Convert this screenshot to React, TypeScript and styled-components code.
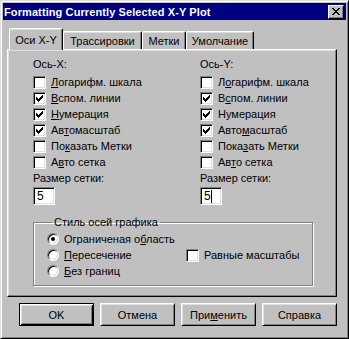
import React from "react";
import styled, { createGlobalStyle } from "styled-components";

const GlobalStyle = createGlobalStyle`
  body {
    margin: 0;
    background: #c0c0c0;
    font-family: "Liberation Sans", Arial, sans-serif;
    font-size: 11px;
    color: #000;
  }
`;

const Window = styled.div`
  box-sizing: border-box;
  width: 349px;
  height: 339px;
  padding: 2px;
  background: #c0c0c0;
  border: 1px solid;
  border-color: #dfdfdf #000 #000 #dfdfdf;
  box-shadow: inset 1px 1px #fff, inset -1px -1px #808080;
`;

const TitleBar = styled.div`
  display: flex;
  align-items: center;
  justify-content: space-between;
  height: 17px;
  padding: 0 2px 0 1px;
  background: #000080;
  color: #fff;
  font-weight: bold;
  font-size: 11px;
  letter-spacing: 0.1px;
`;

const CloseButton = styled.div`
  box-sizing: border-box;
  width: 16px;
  height: 14px;
  display: flex;
  align-items: center;
  justify-content: center;
  background: #c0c0c0;
  border: 1px solid;
  border-color: #fff #000 #000 #fff;
  box-shadow: inset -1px -1px #808080;
`;

const Body = styled.div`
  padding: 7px 0 0 4px;
`;

const TabRow = styled.div`
  display: flex;
  align-items: flex-end;
  height: 22px;
  padding-left: 2px;
  position: relative;
  z-index: 1;
`;

const Tab = styled.div<{ $w: number; $active?: boolean }>`
  box-sizing: border-box;
  width: ${(p) => p.$w}px;
  height: ${(p) => (p.$active ? 22 : 18)}px;
  margin-bottom: ${(p) => (p.$active ? -1 : 0)}px;
  display: flex;
  align-items: center;
  justify-content: center;
  padding-top: ${(p) => (p.$active ? 0 : 1)}px;
  background: #c0c0c0;
  border-top: 1px solid #fff;
  border-left: 1px solid #fff;
  border-right: 1px solid #000;
  border-radius: 2px 2px 0 0;
  box-shadow: inset -1px 0 #808080, inset 0 1px #dfdfdf;
  white-space: nowrap;
`;

const Panel = styled.div`
  box-sizing: border-box;
  width: 330px;
  height: 248px;
  padding: 6px 0 0 25px;
  border: 1px solid;
  border-color: #fff #000 #000 #fff;
  box-shadow: inset -1px -1px #808080, inset 1px 1px #dfdfdf;
`;

const Columns = styled.div`
  display: grid;
  grid-template-columns: 167px 1fr;
`;

const Column = styled.div`
  display: flex;
  flex-direction: column;
`;

const Label = styled.div<{ $gap?: number }>`
  height: 16px;
  line-height: 16px;
  margin-bottom: ${(p) => p.$gap ?? 0}px;
  white-space: nowrap;
`;

const Row = styled.label`
  display: flex;
  align-items: center;
  gap: 5px;
  height: 16px;
  white-space: nowrap;
`;

const Box = styled.span`
  box-sizing: border-box;
  width: 13px;
  height: 13px;
  flex: none;
  display: flex;
  align-items: center;
  justify-content: center;
  background: #fff;
  border: 1px solid;
  border-color: #808080 #fff #fff #808080;
  box-shadow: inset 1px 1px #000, inset -1px -1px #dfdfdf;
`;

const Field = styled.div`
  box-sizing: border-box;
  width: 22px;
  height: 18px;
  margin-top: 1px;
  display: flex;
  align-items: center;
  padding-left: 3px;
  background: #fff;
  border: 1px solid;
  border-color: #808080 #fff #fff #808080;
  box-shadow: inset 1px 1px #000, inset -1px -1px #dfdfdf;
  font-size: 12px;
`;

const Caret = styled.span`
  width: 1px;
  height: 13px;
  background: #000;
`;

const Group = styled.fieldset`
  box-sizing: border-box;
  width: 280px;
  margin: 11px 0 0 0;
  padding: 2px 0 6px 13px;
  border: 1px solid #808080;
  box-shadow: 1px 1px #fff, inset 1px 1px #fff;
  display: flex;
  align-items: center;
`;

const Legend = styled.legend`
  margin-left: 5px;
  padding: 0 2px;
  line-height: 13px;
`;

const RadioColumn = styled.div`
  width: 139px;
  display: flex;
  flex-direction: column;
`;

const RadioDot = styled.span<{ $on?: boolean }>`
  box-sizing: border-box;
  width: 12px;
  height: 12px;
  flex: none;
  border-radius: 50%;
  background: #fff;
  border: 1px solid;
  border-color: #808080 #fff #fff #808080;
  box-shadow: inset 1px 1px #000, inset -1px -1px #dfdfdf;
  display: flex;
  align-items: center;
  justify-content: center;

  &::after {
    content: "";
    width: 4px;
    height: 4px;
    border-radius: 50%;
    background: ${(p) => (p.$on ? "#000" : "transparent")};
  }
`;

const ButtonRow = styled.div`
  display: flex;
  gap: 6px;
  padding: 6px 0 0 12px;
`;

const Button = styled.div<{ $default?: boolean }>`
  box-sizing: border-box;
  width: 75px;
  height: 23px;
  display: flex;
  align-items: center;
  justify-content: center;
  background: #c0c0c0;
  border: 1px solid;
  border-color: ${(p) => (p.$default ? "#000" : "#fff #000 #000 #fff")};
  box-shadow: ${(p) =>
    p.$default
      ? "inset 1px 1px #fff, inset -1px -1px #000, inset 2px 2px #dfdfdf, inset -2px -2px #808080"
      : "inset 1px 1px #dfdfdf, inset -1px -1px #808080"};
`;

const Pixels = ({ rows }: { rows: string[] }) => (
  <svg
    width={rows[0].length}
    height={rows.length}
    shapeRendering="crispEdges"
    style={{ display: "block" }}
  >
    {rows.flatMap((r, y) =>
      r.split("").map((c, x) =>
        c === "x" ? <rect key={`${x}-${y}`} x={x} y={y} width={1} height={1} fill="#000" /> : null
      )
    )}
  </svg>
);

const CHECK = [
  "......x",
  ".....xx",
  "x...xxx",
  "xx.xxx.",
  "xxxxx..",
  ".xxx...",
  "..x....",
];

const CROSS = [
  "xx....xx",
  ".xx..xx.",
  "..xxxx..",
  "...xx...",
  "..xxxx..",
  ".xx..xx.",
  "xx....xx",
];

const Check = ({ on, children }: { on?: boolean; children: React.ReactNode }) => (
  <Row>
    <Box>{on && <Pixels rows={CHECK} />}</Box>
    <span>{children}</span>
  </Row>
);

const Radio = ({ on, children }: { on?: boolean; children: React.ReactNode }) => (
  <Row>
    <RadioDot $on={on} />
    <span>{children}</span>
  </Row>
);

type Axis = {
  title: string;
  keys: [string, string, string][];
  focused?: boolean;
};

const axes: Axis[] = [
  {
    title: "Ось-X:",
    keys: [
      ["", "Л", "огарифм. шкала"],
      ["", "В", "спом. линии"],
      ["", "Н", "умерация"],
      ["Ав", "т", "омасштаб"],
      ["По", "к", "азать Метки"],
      ["А", "в", "то сетка"],
    ],
  },
  {
    title: "Ось-Y:",
    focused: true,
    keys: [
      ["Л", "о", "гарифм. шкала"],
      ["В", "с", "пом. линии"],
      ["Нумерация", "", ""],
      ["Авто", "м", "асштаб"],
      ["Пока", "з", "ать Метки"],
      ["Ав", "т", "о сетка"],
    ],
  },
];

const checked = [false, true, true, true, false, false];

export default function App() {
  return (
    <>
      <GlobalStyle />
      <Window>
        <TitleBar>
          <span>Formatting Currently Selected X-Y Plot</span>
          <CloseButton>
            <Pixels rows={CROSS} />
          </CloseButton>
        </TitleBar>
        <Body>
          <TabRow>
            <Tab $w={54} $active>
              Оси X-Y
            </Tab>
            <Tab $w={79}>Трассировки</Tab>
            <Tab $w={44}>Метки</Tab>
            <Tab $w={68}>Умолчание</Tab>
          </TabRow>
          <Panel>
            <Columns>
              {axes.map((a) => (
                <Column key={a.title}>
                  <Label $gap={2}>{a.title}</Label>
                  {a.keys.map(([pre, key, post], i) => (
                    <Check key={i} on={checked[i]}>
                      {pre}
                      {key && <u>{key}</u>}
                      {post}
                    </Check>
                  ))}
                  <Label>Размер сетки:</Label>
                  <Field>
                    5{a.focused && <Caret />}
                  </Field>
                </Column>
              ))}
            </Columns>
            <Group>
              <Legend>Стиль осей графика</Legend>
              <RadioColumn>
                <Radio on>
                  Ограниченая о<u>б</u>ласть
                </Radio>
                <Radio>
                  <u>П</u>ересечение
                </Radio>
                <Radio>
                  <u>Б</u>ез границ
                </Radio>
              </RadioColumn>
              <Check>Равные масштабы</Check>
            </Group>
          </Panel>
          <ButtonRow>
            <Button $default>OK</Button>
            <Button>Отмена</Button>
            <Button>
              При<u>м</u>енить
            </Button>
            <Button>Справка</Button>
          </ButtonRow>
        </Body>
      </Window>
    </>
  );
}
